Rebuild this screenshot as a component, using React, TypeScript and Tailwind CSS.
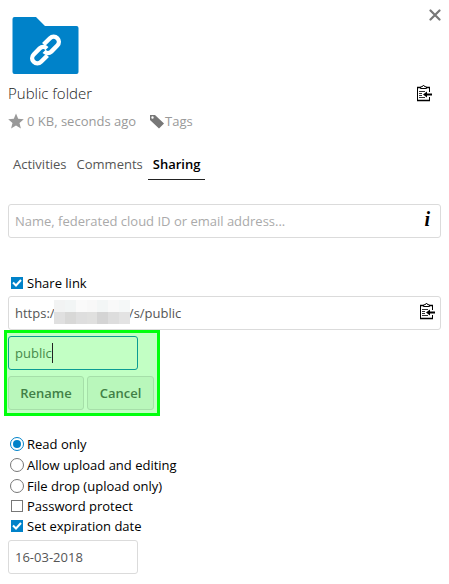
import React from "react";

const mosaic = [
  ["#f2f3f3", "#f2f5f5", "#fafafa", "#f8f8f8", "#f3f6f6", "#f9f9f9", "#f5f8f8"],
  ["#e0e0e0", "#d8d8d7", "#dedede", "#e0e0df", "#d4d4d4", "#dddddd", "#e3e3e3"],
];

function ClipboardIcon() {
  return (
    <svg width="16" height="18" viewBox="0 0 16 18" fill="none" stroke="#000" aria-hidden="true">
      <path d="M13.500 8V4M13.500 13v3M1.500 3v14" />
      <path d="M1 3.500h13M1 16.500h13" strokeWidth="1.400" />
      <path d="M4.500 4.500V3l2-.5L7.500 1l1 1.500 2 .5v1.500z" fill="#fff" />
      <path d="M3 7.500h6M3 9.500h3M3 11.500h3M3 13.500h6" strokeWidth=".8" />
      <path d="M16 10.500h-6" strokeWidth="2" />
      <path d="M7 10.500l4-3v6z" fill="#000" stroke="none" />
    </svg>
  );
}

function Check({ type, name, label, checked }: { type: "checkbox" | "radio"; name: string; label: string; checked?: boolean }) {
  const radio = type === "radio";
  return (
    <label className={radio ? "flex h-[21px] items-center gap-[3px] pl-[2px]" : "flex h-5 items-center gap-1 pl-[3px]"}>
      <span className="grid place-items-center">
        <input
          type={type}
          name={name}
          defaultChecked={checked}
          className={
            radio
              ? "peer col-start-1 row-start-1 h-[14px] w-[14px] appearance-none rounded-full border border-[#777] bg-white checked:border-[#0082c9]"
              : "peer col-start-1 row-start-1 h-3 w-3 appearance-none border border-[#777] bg-white checked:border-[#0082c9] checked:bg-[#0082c9]"
          }
        />
        {radio ? (
          <span className="col-start-1 row-start-1 hidden h-2 w-2 rounded-full bg-[#0082c9] peer-checked:block" />
        ) : (
          <svg viewBox="0 0 12 12" className="col-start-1 row-start-1 hidden h-3 w-3 peer-checked:block" fill="none" stroke="#fff" strokeWidth="2">
            <path d="M2 5.500 5 8.500 10 3" />
          </svg>
        )}
      </span>
      {label}
    </label>
  );
}

const field = "h-[34px] rounded-[3px] border border-[#dbdbdb] bg-white px-[6px] text-[#555] outline-none";
const button = "h-[34px] rounded-[3px] border border-[#a6dfa9] bg-[#b9f7bb] font-semibold text-[#417f46]";

export default function App() {
  return (
    <main className="bg-white px-2 pb-[10px] font-['Open_Sans','Noto_Sans',sans-serif] text-[13px] leading-5 text-black">
      <header>
        <div className="flex items-start justify-between pt-2">
          <svg width="68" height="58" viewBox="0 0 68 58" className="ml-1 mt-2" aria-hidden="true">
            <path d="M2.500 1H24l9 9h31.500q2 0 2 2v44q0 2-2 2h-62q-2 0-2-2V3q0-2 2-2z" fill="#0082c9" />
            <g fill="none" stroke="#fff" strokeWidth="4.400" transform="translate(33.500 34) rotate(-45)">
              <path d="M-2.500 5.200h-9a5.200 5.200 0 0 1 0-10.400h8.500a5.200 5.200 0 0 1 5 5.200" />
              <path d="M2.500-5.200h9a5.200 5.200 0 0 1 0 10.400H3a5.200 5.200 0 0 1-5-5.200" />
            </g>
          </svg>
          <button aria-label="Close">
            <svg width="12" height="14" viewBox="0 0 12 14" stroke="#777" strokeWidth="2.200" strokeLinecap="round">
              <path d="M1.500 2.500l9 9M10.500 2.500l-9 9" />
            </svg>
          </button>
        </div>
        <div className="mt-[9px] flex h-5 items-center justify-between">
          <h1 className="text-[15px] font-light text-[#222]">Public folder</h1>
          <button aria-label="Copy link" className="mr-[9px]"><ClipboardIcon /></button>
        </div>
        <div className="mt-2 flex h-5 items-center text-[#999]">
          <svg width="16" height="16" viewBox="0 0 16 16" fill="#999" aria-hidden="true">
            <path d="M8 .5 10.200 5.800l5.600.4-4.300 3.700 1.400 5.600L8 12.500l-4.900 3 1.400-5.600L.2 6.200l5.600-.4z" />
          </svg>
          <span className="ml-[3px]">0 KB, seconds ago</span>
          <svg width="16" height="15" viewBox="0 0 16 15" className="ml-[13px]" fill="#777" aria-hidden="true">
            <path fillRule="evenodd" d="M1 1h5l9 8.500-5 5L1 6zM3.500 2.300a1.200 1.200 0 1 0 0 2.400 1.200 1.200 0 0 0 0-2.400z" />
          </svg>
          <span>Tags</span>
        </div>
      </header>

      <nav className="mt-[23px] flex text-[#555]">
        <button className="h-[26px] px-[5px] pb-[6px]">Activities</button>
        <button className="h-[26px] px-[5px] pb-[6px]">Comments</button>
        <button className="h-[26px] border-b border-[#222] px-[5px] pb-[5px] font-semibold text-black">Sharing</button>
      </nav>

      <div className="mt-6 flex items-center rounded-[3px] border border-[#dbdbdb]">
        <input
          aria-label="Share with"
          placeholder="Name, federated cloud ID or email address..."
          className="h-8 min-w-0 flex-1 bg-transparent px-[6px] outline-none placeholder:text-[#aaa]"
        />
        <button aria-label="Information" className="mr-[10px] pb-1 font-['Liberation_Serif',serif] text-[20px] font-bold italic">i</button>
      </div>

      <section className="mt-[35px]">
        <Check type="checkbox" name="share" label="Share link" checked />
        <div className="relative mt-[3px] flex items-center rounded-[3px] border border-[#dbdbdb]">
          <input
            aria-label="Public link"
            readOnly
            value={"https:/" + "\u00a0".repeat(22) + "/s/public"}
            className="h-8 min-w-0 flex-1 bg-transparent px-[6px] text-[#555] outline-none"
          />
          <div className="absolute left-[45px] top-[3px] grid w-[76px] grid-cols-7" aria-hidden="true">
            {mosaic.flat().map((c, i) => (
              <span key={i} className="h-3" style={{ backgroundColor: c }} />
            ))}
          </div>
          <button aria-label="Copy public link" className="mr-[5px] pb-1"><ClipboardIcon /></button>
        </div>

        <form className="-ml-1 flex w-fit flex-col gap-[6px] border-[3px] border-[#00ff0c] bg-[#c2ffc4] px-[1px] py-[3px]">
          <div className="flex h-[34px] w-[130px] items-center rounded-[3px] border border-[#0b9b93] px-[6px]">
            <input aria-label="Link name" defaultValue="public" className="w-[38px] border-r border-[#222] bg-transparent text-[#468a4b] outline-none" />
          </div>
          <div className="flex gap-[3px] pr-[2px]">
            <button type="button" className={button + " w-[76px]"}>Rename</button>
            <button type="button" className={button + " w-[67px]"}>Cancel</button>
          </div>
        </form>

        <div className="mt-[17px]">
          <Check type="radio" name="permission" label="Read only" checked />
          <Check type="radio" name="permission" label="Allow upload and editing" />
          <Check type="radio" name="permission" label="File drop (upload only)" />
          <Check type="checkbox" name="password" label="Password protect" />
          <Check type="checkbox" name="expiration" label="Set expiration date" checked />
        </div>
        <input aria-label="Expiration date" defaultValue="16-03-2018" className={field + " mt-1 block w-[130px]"} />
      </section>
    </main>
  );
}
